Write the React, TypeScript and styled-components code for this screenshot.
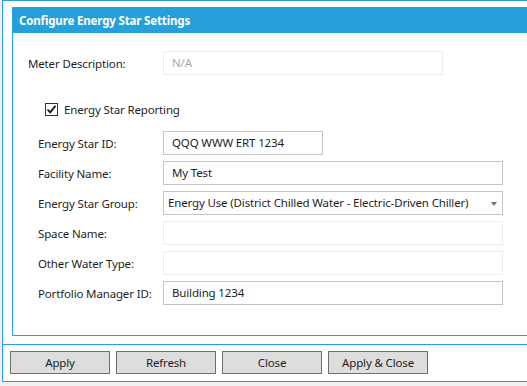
import styled, { createGlobalStyle } from 'styled-components'

const GlobalStyle = createGlobalStyle`
  html, body {
    margin: 0;
    padding: 0;
    background: #f0f0f0;
    overflow: hidden;
  }
  body {
    font-family: 'Segoe UI', 'Noto Sans', 'Open Sans', sans-serif;
    font-size: 11.5px;
    letter-spacing: -0.15px;
    color: #1e1e1e;
  }
`;

const Window = styled.div`
  margin-left: 2px;
  background: #fff;
  border: 1px solid #26a0da;
  border-right: none;
`;

const Content = styled.div`
  padding: 6px 0 8px 9px;
`;

const Panel = styled.section`
  border: 1px solid #26a0da;
  border-right: none;
  height: 327px;
`;

const PanelHeader = styled.h1`
  margin: 0;
  height: 25px;
  line-height: 25px;
  padding-left: 6px;
  background: #26a0da;
  color: #fff;
  font-size: 11.5px;
  font-weight: 700;
`;

const FormRow = styled.div<{ $indent: number; $label: number; $top?: number }>`
  display: grid;
  grid-template-columns: ${(p) => p.$label}px auto;
  align-items: center;
  height: 24px;
  margin-left: ${(p) => p.$indent}px;
  margin-top: ${(p) => p.$top ?? 6}px;
`;

const Label = styled.span`
  white-space: nowrap;
`;

const Field = styled.div<{ $width: number; $disabled?: boolean }>`
  box-sizing: border-box;
  width: ${(p) => p.$width}px;
  height: 24px;
  border: 1px solid ${(p) => (p.$disabled ? '#ececec' : '#c4c4c4')};
  color: ${(p) => (p.$disabled ? '#a8a8a8' : '#1e1e1e')};
  padding-left: 8px;
  line-height: 22px;
  white-space: nowrap;
  overflow: hidden;
`;

const Combo = styled(Field)`
  position: relative;
  padding-left: 4px;
`;

const Arrow = styled.span`
  position: absolute;
  right: 5px;
  top: 10px;
  width: 0;
  height: 0;
  border-left: 3px solid transparent;
  border-right: 3px solid transparent;
  border-top: 4px solid #707070;
`;

const CheckRow = styled.label`
  display: flex;
  align-items: center;
  gap: 6px;
  margin: 26px 0 14px 32px;
  height: 16px;
`;

const CheckBox = styled.span`
  box-sizing: border-box;
  width: 13px;
  height: 13px;
  border: 1px solid #333;
  background: #fff;
  display: flex;
  align-items: center;
  justify-content: center;
`;

const Footer = styled.div`
  border-top: 1px solid #26a0da;
  padding: 6px 0 7px 7px;
  display: flex;
  gap: 6px;
`;

const Button = styled.button`
  box-sizing: border-box;
  width: 100px;
  height: 23px;
  background: #dddddd;
  border: 1px solid #707070;
  font-family: inherit;
  font-size: 11.5px;
  letter-spacing: inherit;
  color: #1e1e1e;
  padding: 0;
`;

function App() {
  return (
    <>
      <GlobalStyle />
      <Window>
        <Content>
          <Panel>
            <PanelHeader>Configure Energy Star Settings</PanelHeader>
            <FormRow $indent={15} $label={135} $top={18}>
              <Label>Meter Description:</Label>
              <Field $width={280} $disabled>N/A</Field>
            </FormRow>
            <CheckRow>
              <CheckBox>
                <svg width="11" height="11" viewBox="0 0 11 11">
                  <path d="M1.5 5.5 L4.2 8.4 L9.5 1.8" fill="none" stroke="#111" strokeWidth="1.8" />
                </svg>
              </CheckBox>
              <span>Energy Star Reporting</span>
            </CheckRow>
            <FormRow $indent={25} $label={125} $top={0}>
              <Label>Energy Star ID:</Label>
              <Field $width={160}>QQQ WWW ERT 1234</Field>
            </FormRow>
            <FormRow $indent={25} $label={125}>
              <Label>Facility Name:</Label>
              <Field $width={340}>My Test</Field>
            </FormRow>
            <FormRow $indent={25} $label={125}>
              <Label>Energy Star Group:</Label>
              <Combo $width={340}>
                Energy Use (District Chilled Water - Electric-Driven Chiller)
                <Arrow />
              </Combo>
            </FormRow>
            <FormRow $indent={25} $label={125}>
              <Label>Space Name:</Label>
              <Field $width={340} $disabled />
            </FormRow>
            <FormRow $indent={25} $label={125}>
              <Label>Other Water Type:</Label>
              <Field $width={340} $disabled />
            </FormRow>
            <FormRow $indent={25} $label={125}>
              <Label>Portfolio Manager ID:</Label>
              <Field $width={340}>Building 1234</Field>
            </FormRow>
          </Panel>
        </Content>
        <Footer>
          <Button>Apply</Button>
          <Button>Refresh</Button>
          <Button>Close</Button>
          <Button>Apply &amp; Close</Button>
        </Footer>
      </Window>
    </>
  )
}

export default App
